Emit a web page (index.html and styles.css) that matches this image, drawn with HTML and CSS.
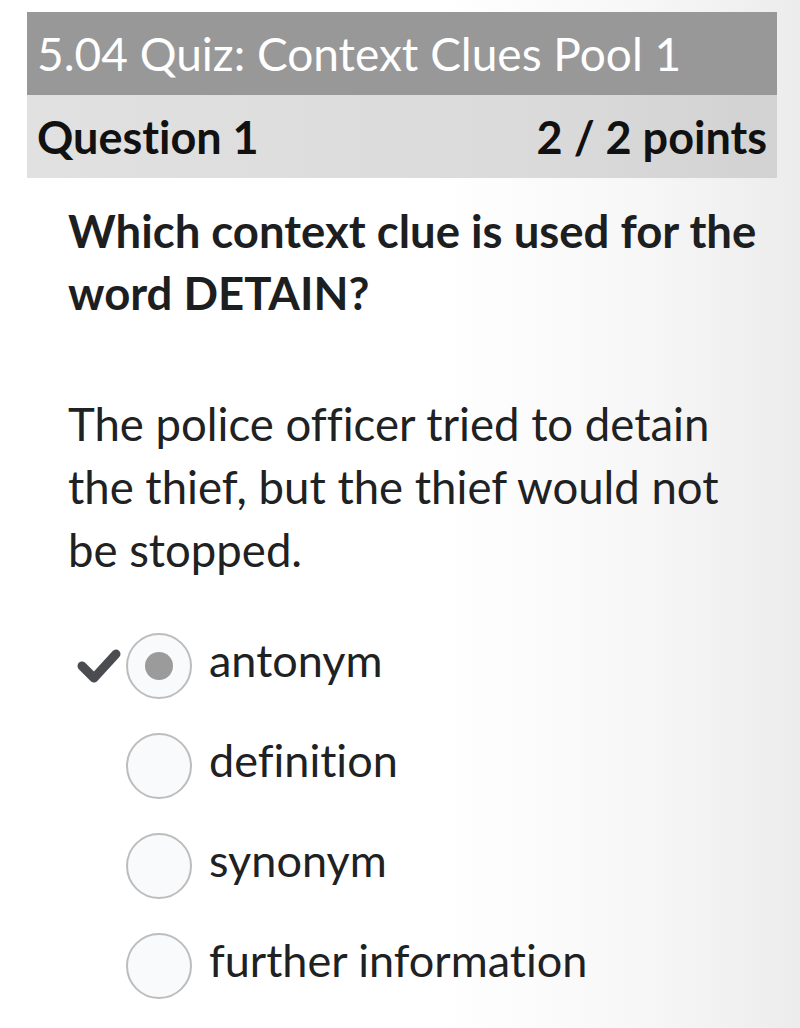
FILE: index.html
```html
<!DOCTYPE html>
<html lang="en">
  <head>
    <meta charset="UTF-8" />
    <meta name="viewport" content="width=device-width, initial-scale=1.0" />
    <title>5.04 Quiz: Context Clues Pool 1</title>
    <link rel="stylesheet" href="styles.css">
  </head>
  <body>
    <main class="quiz">
      <header class="quiz-title">5.04 Quiz: Context Clues Pool 1</header>
      <div class="question-bar">
        <h2>Question 1</h2>
        <span class="points">2 / 2 points</span>
      </div>

      <section class="question">
        <p class="prompt">Which context clue is used for the word DETAIN?</p>
        <p class="passage">The police officer tried to detain the thief, but the thief would not be stopped.</p>

        <ul class="options">
          <li class="option">
            <span class="mark">
              <svg width="46" height="40" viewBox="0 0 46 40">
                <path d="M6 20 L18 32 L40 8" fill="none" stroke="#4a4c4f" stroke-width="9" stroke-linecap="round" stroke-linejoin="round"/>
              </svg>
            </span>
            <span class="radio checked"></span>
            <span class="label">antonym</span>
          </li>
          <li class="option">
            <span class="mark"></span>
            <span class="radio"></span>
            <span class="label">definition</span>
          </li>
          <li class="option">
            <span class="mark"></span>
            <span class="radio"></span>
            <span class="label">synonym</span>
          </li>
          <li class="option">
            <span class="mark"></span>
            <span class="radio"></span>
            <span class="label">further information</span>
          </li>
        </ul>
      </section>
    </main>
  </body>
</html>
```

FILE: styles.css
```css
body {
  margin: 0;
  padding: 0;
  font-family: "Lato", "Open Sans", sans-serif;
  font-variant-ligatures: none;
  color: #202122;
  min-height: 1028px;
  background: linear-gradient(to right, #ffffff 55%, #f7f7f7 80%, #ececec 100%);
}
.quiz {
  width: 750px;
  margin-left: 27px;
  padding-top: 12px;
}
.quiz-title {
  height: 83px;
  background-color: #989898;
  color: #ffffff;
  font-size: 46px;
  line-height: 83px;
  padding-left: 10px;
}
.question-bar {
  height: 83px;
  display: flex;
  justify-content: space-between;
  align-items: center;
  padding: 0 10px;
  background: linear-gradient(to right, #e1e1e1, #dadada 70%, #d2d2d2);
  color: #111;
}
.question-bar h2 {
  margin: 0;
  font-size: 45px;
  font-weight: 700;
}
.points {
  font-size: 45px;
  font-weight: 700;
}
.question {
  padding-left: 41px;
  padding-top: 22px;
}
.prompt {
  margin: 0;
  font-size: 45.5px;
  font-weight: 700;
  line-height: 62px;
  color: #1d1e1f;
  padding-right: 10px;
}
.passage {
  margin: 68px 0 0 0;
  font-size: 45.5px;
  line-height: 63px;
  padding-right: 40px;
}
.options {
  list-style: none;
  margin: 35px 0 0 0;
  padding: 0;
}
.option {
  display: flex;
  align-items: center;
  height: 100px;
}
.mark {
  width: 58px;
  display: flex;
  justify-content: flex-start;
  padding-left: 8px;
  box-sizing: border-box;
}
.radio {
  width: 62px;
  height: 62px;
  border: 2px solid #bdbdbd;
  border-radius: 50%;
  background-color: #f9fafb;
  display: flex;
  align-items: center;
  justify-content: center;
}
.radio.checked::after {
  content: "";
  width: 28px;
  height: 28px;
  border-radius: 50%;
  background-color: #9b9b9b;
}
.label {
  margin-left: 17px;
  font-size: 45px;
  margin-top: -12px;
}
```
